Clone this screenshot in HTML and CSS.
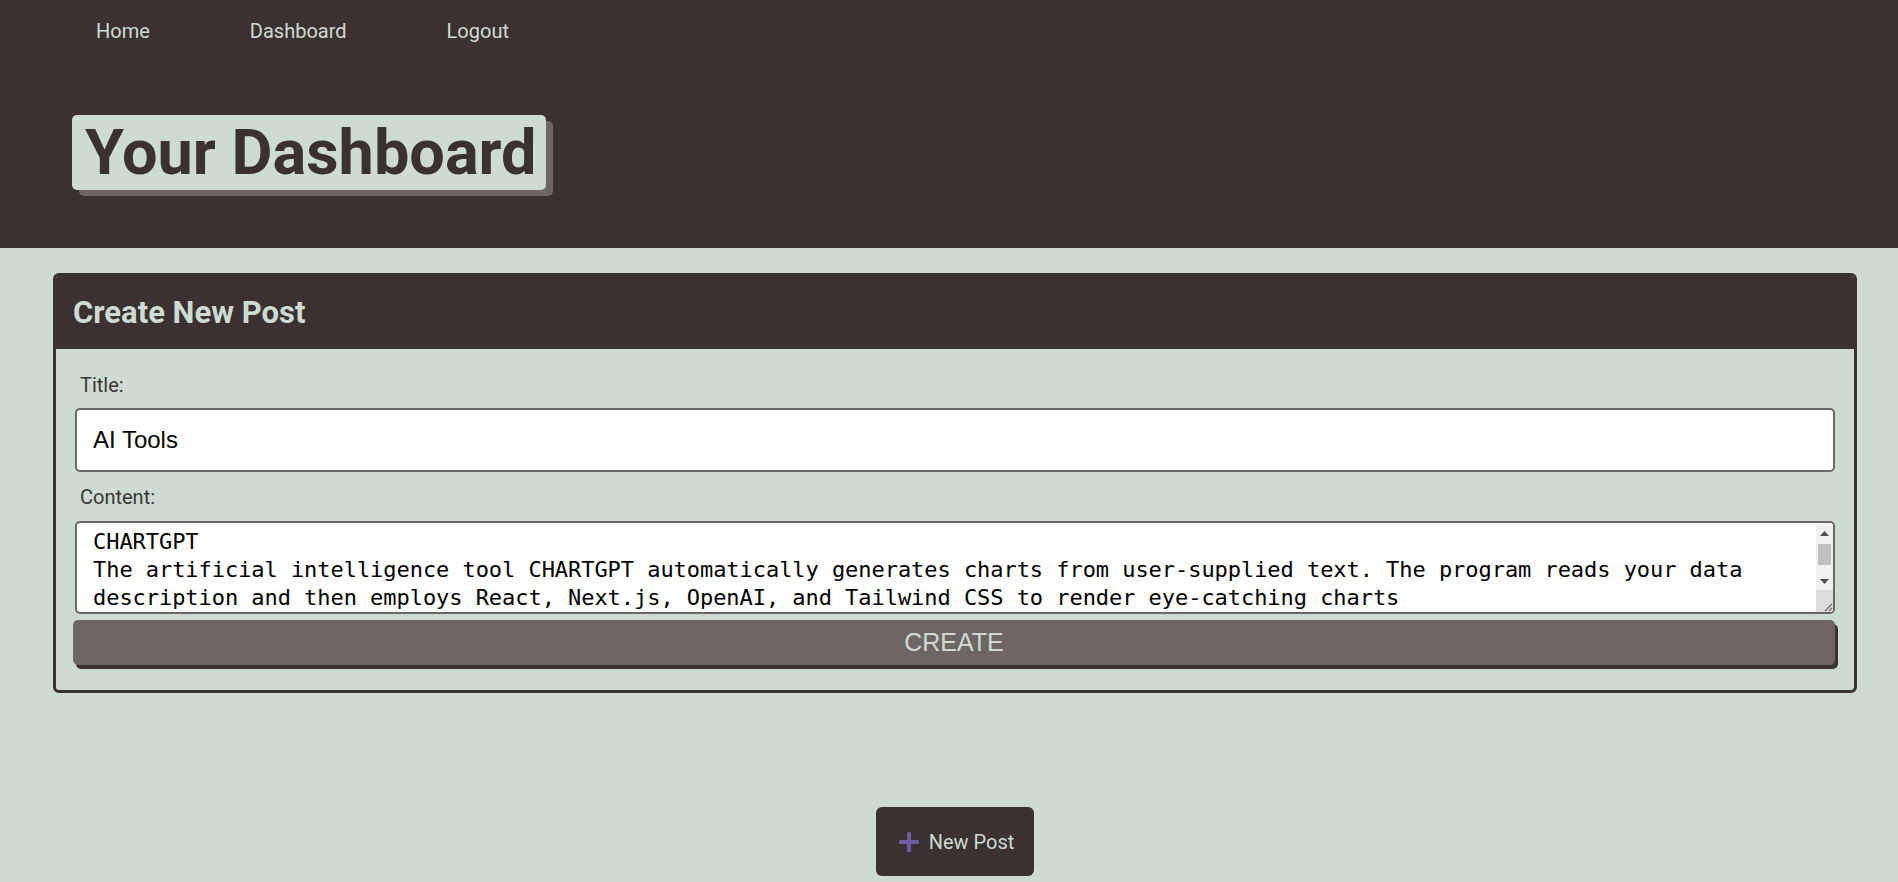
FILE: index.html
```html
<!DOCTYPE html>
<html lang="en">
<head>
<meta charset="utf-8">
<title>Your Dashboard</title>
<link rel="stylesheet" href="styles.css">
</head>
<body>
<header class="site-header">
  <nav class="nav">
    <a class="nav-link" href="#">Home</a>
    <a class="nav-link" href="#">Dashboard</a>
    <a class="nav-link" href="#">Logout</a>
  </nav>
  <div class="title-row">
    <h1 class="page-title">Your Dashboard</h1>
  </div>
</header>
<main class="main">
  <section class="card">
    <div class="card-head">
      <h2 class="card-title">Create New Post</h2>
    </div>
    <form class="card-body">
      <label class="field-label" for="title">Title:</label>
      <input class="field-input" id="title" type="text" value="AI Tools">
      <label class="field-label field-label-gap" for="content">Content:</label>
      <div class="area-wrap">
        <textarea class="field-area" id="content" spellcheck="false">CHARTGPT
The artificial intelligence tool CHARTGPT automatically generates charts from user-supplied text. The program reads your data description and then employs React, Next.js, OpenAI, and Tailwind CSS to render eye-catching charts



</textarea>
        <div class="fake-scroll" aria-hidden="true">
          <span class="sb-btn sb-up">
            <svg width="9" height="5" viewBox="0 0 9 5"><polygon points="0,5 9,5 4.5,0" fill="#505050"/></svg>
          </span>
          <span class="sb-track"><span class="sb-thumb"></span></span>
          <span class="sb-btn sb-down">
            <svg width="9" height="5" viewBox="0 0 9 5"><polygon points="0,0 9,0 4.5,5" fill="#505050"/></svg>
          </span>
          <span class="sb-corner">
            <svg width="11" height="11" viewBox="0 0 11 11"><path d="M10 3 L3 10 M10 7 L7 10" stroke="#6b6b6b" stroke-width="1.2" fill="none"/></svg>
          </span>
        </div>
      </div>
      <button class="create-btn" type="button">CREATE</button>
    </form>
  </section>
  <div class="new-post-row">
    <button class="new-post-btn" type="button">
      <svg class="plus" width="20" height="20" viewBox="0 0 20 20" aria-hidden="true">
        <rect x="8" y="0" width="4" height="20" rx="1.5" fill="#6c5ea6"/>
        <rect x="0" y="8" width="20" height="4" rx="1.5" fill="#6c5ea6"/>
      </svg>
      <span>New Post</span>
    </button>
  </div>
</main>
</body>
</html>
```
FILE: styles.css
```css
* { box-sizing: border-box; }

body {
  margin: 0;
  background: #cddbd3;
  font-family: Roboto, "Noto Sans", sans-serif;
  color: #3a3130;
}

.site-header {
  background: #3a3130;
  height: 248px;
  display: flex;
  flex-direction: column;
}

.nav {
  display: flex;
  gap: 100px;
  padding: 19px 0 0 96px;
}

.nav-link {
  color: #cddbd3;
  text-decoration: none;
  font-size: 20px;
  line-height: 24px;
}

.title-row {
  display: flex;
  padding: 72px 0 0 72px;
}

.page-title {
  margin: 0;
  background: #cddbd3;
  color: #3a3130;
  font-size: 63px;
  font-weight: 700;
  height: 75px;
  line-height: 75px;
  padding: 0 9px 0 13px;
  border-radius: 5px;
  box-shadow: 7px 6px 0 #6e6664;
}

.main {
  padding: 25px 41px 0 53px;
}

.card {
  border: 3px solid #3a3130;
  border-radius: 6px;
  overflow: hidden;
}

.card-head {
  background: #3a3130;
  height: 73px;
  display: flex;
  align-items: center;
  padding-left: 17px;
}

.card-title {
  margin: 0;
  color: #cddbd3;
  font-size: 31px;
  font-weight: 700;
}

.card-body {
  display: flex;
  flex-direction: column;
  padding: 24px 19px 25px 19px;
}

.field-label {
  font-size: 20px;
  line-height: 24px;
  padding-left: 5px;
  margin-bottom: 11px;
  color: #3d3533;
}

.field-label-gap {
  margin-top: 13px;
  margin-bottom: 12px;
}

.field-input {
  height: 64px;
  border: 2px solid #6e6664;
  border-radius: 5px;
  padding: 0 16px;
  font-family: "Liberation Sans", Arial, sans-serif;
  font-size: 24px;
  color: #000;
  background: #fff;
}

.area-wrap {
  position: relative;
  display: flex;
}

.field-area {
  flex: 1;
  height: 93px;
  border: 2px solid #6e6664;
  border-radius: 5px;
  padding: 5px 33px 5px 16px;
  font-family: "DejaVu Sans Mono", monospace;
  font-size: 22px;
  letter-spacing: -0.05px;
  line-height: 28px;
  color: #000;
  background: #fff;
  resize: none;
  overflow: hidden;
}

.fake-scroll {
  position: absolute;
  top: 2px;
  right: 2px;
  bottom: 2px;
  width: 17px;
  display: flex;
  flex-direction: column;
  background: #f1f1f1;
  border-radius: 0 3px 3px 0;
  pointer-events: none;
}

.sb-btn {
  display: flex;
  align-items: center;
  justify-content: center;
}

.sb-up { height: 20px; }
.sb-down { height: 18px; }

.sb-track {
  flex: 1;
  padding: 1px 2px 0 2px;
}

.sb-thumb {
  display: block;
  height: 21px;
  background: #c1c1c1;
}

.sb-corner {
  height: 22px;
  display: flex;
  align-items: flex-end;
  justify-content: flex-end;
  background: #dcdcdc;
  border-radius: 0 0 3px 0;
}

.sb-corner svg { display: block; }

.create-btn {
  margin: 6px 0 0 -2px;
  height: 45px;
  border: 0;
  border-radius: 5px;
  background: #6e6664;
  color: #cddbd3;
  font-family: "Liberation Sans", Arial, sans-serif;
  font-size: 25px;
  box-shadow: 3px 4px 0 #3a3130;
}

.new-post-row {
  display: flex;
  justify-content: center;
  margin-top: 114px;
}

.new-post-btn {
  display: inline-flex;
  align-items: center;
  gap: 10px;
  height: 69px;
  padding: 0 20px 0 23px;
  border: 0;
  border-radius: 6px;
  background: #3a3130;
  color: #cddbd3;
  font-family: Roboto, "Noto Sans", sans-serif;
  font-size: 20px;
}

.plus { display: block; }
```
